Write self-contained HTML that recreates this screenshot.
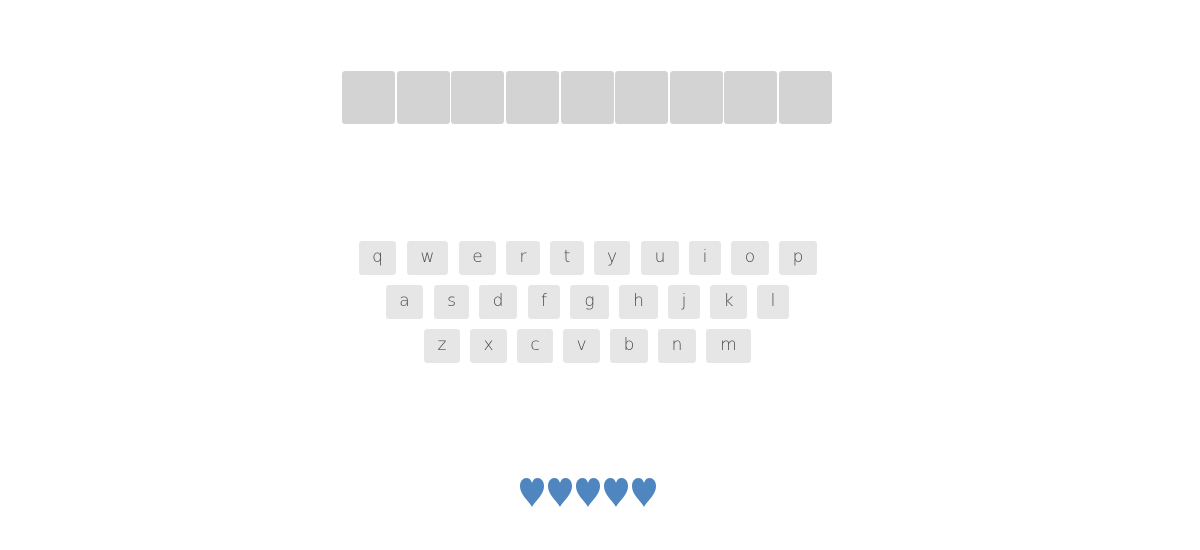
<!DOCTYPE html>
<html><head><meta charset="utf-8"><style>
body{margin:0;width:1200px;height:550px;background:#fff;position:relative;font-family:"DejaVu Sans","Liberation Sans",sans-serif;overflow:hidden}
.b{position:absolute;top:71px;width:53px;height:53px;background:#d3d3d3;border-radius:3px}
.k{position:absolute;height:34px;background:#e6e6e6;border-radius:3px;color:#4a4a4a;font-size:17px;font-weight:200;line-height:33px;text-align:center}
.h{position:absolute;top:478px}
</style></head><body>
<div class="b" style="left:342px"></div><div class="b" style="left:397px"></div><div class="b" style="left:451px"></div><div class="b" style="left:506px"></div><div class="b" style="left:561px"></div><div class="b" style="left:615px"></div><div class="b" style="left:670px"></div><div class="b" style="left:724px"></div><div class="b" style="left:779px"></div>

<div class="k" style="top:241px;left:359px;width:37px">q</div>
<div class="k" style="top:241px;left:407px;width:41px">w</div>
<div class="k" style="top:241px;left:459px;width:37px">e</div>
<div class="k" style="top:241px;left:506px;width:34px">r</div>
<div class="k" style="top:241px;left:550px;width:34px">t</div>
<div class="k" style="top:241px;left:594px;width:36px">y</div>
<div class="k" style="top:241px;left:641px;width:38px">u</div>
<div class="k" style="top:241px;left:689px;width:32px">i</div>
<div class="k" style="top:241px;left:731px;width:38px">o</div>
<div class="k" style="top:241px;left:779px;width:38px">p</div>

<div class="k" style="top:285px;left:386px;width:37px">a</div>
<div class="k" style="top:285px;left:434px;width:35px">s</div>
<div class="k" style="top:285px;left:479px;width:38px">d</div>
<div class="k" style="top:285px;left:528px;width:32px">f</div>
<div class="k" style="top:285px;left:570px;width:39px">g</div>
<div class="k" style="top:285px;left:619px;width:39px">h</div>
<div class="k" style="top:285px;left:668px;width:32px">j</div>
<div class="k" style="top:285px;left:710px;width:37px">k</div>
<div class="k" style="top:285px;left:757px;width:32px">l</div>

<div class="k" style="top:329px;left:424px;width:36px">z</div>
<div class="k" style="top:329px;left:470px;width:37px">x</div>
<div class="k" style="top:329px;left:517px;width:36px">c</div>
<div class="k" style="top:329px;left:563px;width:37px">v</div>
<div class="k" style="top:329px;left:610px;width:38px">b</div>
<div class="k" style="top:329px;left:658px;width:38px">n</div>
<div class="k" style="top:329px;left:706px;width:45px">m</div>

<svg class="h" style="left:518px" width="140" height="30" viewBox="0 0 140 30">
<defs><path id="ht" d="M12 29 C9 23 0 17 0 8 C0 3 3 0 6.5 0 C9.5 0 11 2 12 5 C13 2 14.5 0 17.5 0 C21 0 24 3 24 8 C24 17 15 23 12 29Z" fill="#4f86c0"/></defs>
<use href="#ht" x="2"/><use href="#ht" x="30"/><use href="#ht" x="58"/><use href="#ht" x="86"/><use href="#ht" x="114"/>
</svg>
</body></html>
